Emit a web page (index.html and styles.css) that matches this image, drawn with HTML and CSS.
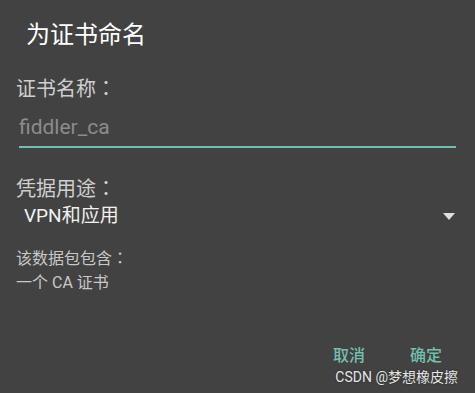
FILE: index.html
```html
<!DOCTYPE html>
<html lang="zh-CN">
<head>
    <meta charset="UTF-8">
    <meta name="viewport" content="width=device-width, initial-scale=1.0">
    <title>为证书命名</title>
    <link rel="stylesheet" href="styles.css">
</head>
<body>
<div class="dialog">
    <h1 class="dialog-title">为证书命名</h1>

    <div class="field-label">证书名称<span class="colon" lang="zh-TW">：</span></div>
    <div class="name-input">fiddler_ca</div>

    <div class="field-label usage-label">凭据用途<span class="colon" lang="zh-TW">：</span></div>
    <div class="usage-select">
        <span>VPN和应用</span>
        <span class="select-arrow"></span>
    </div>

    <div class="package-info">
        <div>该数据包包含<span class="colon" lang="zh-TW">：</span></div>
        <div>一个 CA 证书</div>
    </div>

    <!-- 底部按钮 -->
    <div class="dialog-buttons">
        <span class="dialog-button">取消</span>
        <span class="dialog-button">确定</span>
    </div>
</div>
<div class="watermark">CSDN @梦想橡皮擦</div>
</body>
</html>
```

FILE: styles.css
```css
html, body {
    height: 100%;
}
body {
    margin: 0;
    background-color: #424242;
    font-family: Roboto, "Noto Sans CJK SC", sans-serif;
    position: relative;
    overflow: hidden;
}
.dialog {
    padding-top: 19px;
}
.dialog-title {
    margin: 0 0 23px 26px;
    font-size: 24px;
    line-height: 32px;
    font-weight: normal;
    color: #ffffff;
}
.field-label {
    margin-left: 16px;
    font-size: 20px;
    line-height: 28px;
    color: #cfcfcf;
}
.colon {
    font-family: "Noto Sans CJK TC", sans-serif;
}
.name-input {
    margin: 10px 19px 0 19px;
    padding-bottom: 5px;
    font-size: 21px;
    line-height: 28px;
    color: #8c8c8c;
    border-bottom: 2px solid #74bdb4;
}
.usage-label {
    margin-top: 26px;
}
.usage-select {
    display: flex;
    justify-content: space-between;
    align-items: center;
    padding: 0 20px 0 24px;
    font-size: 19px;
    line-height: 26px;
    color: #f2f2f2;
}
.select-arrow {
    width: 0;
    height: 0;
    border-left: 6px solid transparent;
    border-right: 6px solid transparent;
    border-top: 7px solid #e0e0e0;
}
.package-info {
    margin: 16px 0 0 16px;
    font-size: 16px;
    line-height: 24px;
    color: #c8c8c8;
}
.dialog-buttons {
    display: flex;
    justify-content: flex-end;
    gap: 45px;
    margin-top: 49px;
    padding-right: 33px;
}
.dialog-button {
    font-size: 16px;
    line-height: 24px;
    font-weight: 500;
    color: #74bfb0;
}
.watermark {
    position: absolute;
    right: 17px;
    bottom: 6px;
    font-size: 14px;
    line-height: 20px;
    color: #e6e6e6;
    text-shadow: 0 0 2px #222;
}
```
